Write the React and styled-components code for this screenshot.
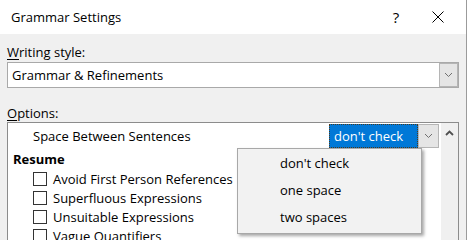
import React from 'react';
import styled, { createGlobalStyle } from 'styled-components';

const GlobalStyle = createGlobalStyle`
  html, body {
    margin: 0;
    padding: 0;
    background: #ffffff;
    overflow: hidden;
  }
  body {
    font-family: 'Open Sans', 'Noto Sans', sans-serif;
    font-size: 13px;
    color: #000;
  }
  * { box-sizing: border-box; }
`;

const Dialog = styled.div`
  width: 467px;
  height: 240px;
  border-right: 1px solid #9b9b9b;
  display: flex;
  flex-direction: column;
  overflow: hidden;
`;

const TitleBar = styled.div`
  height: 34px;
  flex: 0 0 34px;
  background: #ffffff;
  display: flex;
  align-items: center;
  padding-left: 11px;
`;

const Title = styled.div`
  flex: 1;
`;

const TitleButton = styled.div`
  width: ${(p) => p.$w}px;
  height: 34px;
  display: flex;
  align-items: center;
  justify-content: center;
  font-size: 15px;
`;

const Body = styled.div`
  flex: 1;
  background: #f0f0f0;
  padding: 10px 7px 0 7px;
  display: flex;
  flex-direction: column;
`;

const Label = styled.div`
  height: 16px;
  line-height: 16px;
  margin-top: ${(p) => p.$top || 0}px;
  u { text-decoration-thickness: 1px; text-underline-offset: 2px; }
`;

const Select = styled.div`
  margin-top: 2px;
  height: 26px;
  background: #ffffff;
  border: 1px solid #a9a9a9;
  display: flex;
  align-items: stretch;
`;

const SelectValue = styled.div`
  flex: 1;
  display: flex;
  align-items: center;
  padding-left: 4px;
`;

const DropButton = styled.div`
  width: ${(p) => p.$w || 19}px;
  background: #e5e5e5;
  border: 1px solid #b5b5b5;
  display: flex;
  align-items: center;
  justify-content: center;
`;

const OptionsBox = styled.div`
  position: relative;
  margin-top: 1px;
  height: 130px;
  background: #ffffff;
  border: 1px solid #8c8c8c;
  border-bottom: none;
  display: flex;
`;

const List = styled.div`
  flex: 1;
  display: flex;
  flex-direction: column;
`;

const SettingRow = styled.div`
  height: 25px;
  margin-bottom: 2px;
  display: flex;
  align-items: center;
  padding-left: 25px;
  padding-right: 2px;
`;

const SettingName = styled.div`
  flex: 1;
`;

const InlineSelect = styled.div`
  height: 24px;
  display: flex;
`;

const Highlight = styled.div`
  width: 89px;
  background: #0078d7;
  color: #ffffff;
  outline: 1px dotted #4a3a20;
  outline-offset: -1px;
  display: flex;
  align-items: center;
  padding-left: 5px;
`;

const GroupTitle = styled.div`
  height: 19px;
  line-height: 19px;
  padding-left: 5px;
  font-weight: 700;
`;

const CheckRow = styled.div`
  height: 19px;
  display: flex;
  align-items: center;
  padding-left: 25px;
  gap: 6px;
`;

const Box = styled.span`
  width: 14px;
  height: 14px;
  border: 1px solid #333333;
  background: #ffffff;
`;

const Scrollbar = styled.div`
  width: 17px;
  background: #f0f0f0;
  display: flex;
  justify-content: center;
  padding-top: 7px;
`;

const Popup = styled.div`
  position: absolute;
  left: 229px;
  top: 25px;
  width: 185px;
  height: 86px;
  background: #f2f2f2;
  border: 1px solid #a8a8a8;
  box-shadow: 2px 2px 3px rgba(0, 0, 0, 0.35);
  padding-top: 1px;
`;

const PopupItem = styled.div`
  height: 27px;
  line-height: 27px;
  padding-left: 42px;
`;

const Chevron = ({ up }) => (
  <svg width="9" height="6" viewBox="0 0 9 6">
    <path
      d={up ? 'M1 5 L4.5 1.5 L8 5' : 'M1 1 L4.5 4.5 L8 1'}
      fill="none"
      stroke={up ? '#505050' : '#707070'}
      strokeWidth={up ? 1.8 : 1}
    />
  </svg>
);

const checks = [
  'Avoid First Person References',
  'Superfluous Expressions',
  'Unsuitable Expressions',
  'Vague Quantifiers',
];

const choices = ["don't check", 'one space', 'two spaces'];

export default function App() {
  return (
    <>
      <GlobalStyle />
      <Dialog>
        <TitleBar>
          <Title>Grammar Settings</Title>
          <TitleButton $w={28}>?</TitleButton>
          <TitleButton $w={56}>
            <svg width="12" height="12" viewBox="0 0 12 12">
              <path d="M0.5 0.5 L11.5 11.5 M11.5 0.5 L0.5 11.5" stroke="#000" strokeWidth="1" />
            </svg>
          </TitleButton>
        </TitleBar>
        <Body>
          <Label>
            <u>W</u>riting style:
          </Label>
          <Select>
            <SelectValue>Grammar &amp; Refinements</SelectValue>
            <DropButton>
              <Chevron />
            </DropButton>
          </Select>
          <Label $top={17}>
            <u>O</u>ptions:
          </Label>
          <OptionsBox>
            <List>
              <SettingRow>
                <SettingName>Space Between Sentences</SettingName>
                <InlineSelect>
                  <Highlight>don't check</Highlight>
                  <DropButton $w={21}>
                    <Chevron />
                  </DropButton>
                </InlineSelect>
              </SettingRow>
              <GroupTitle>Resume</GroupTitle>
              {checks.map((c) => (
                <CheckRow key={c}>
                  <Box />
                  {c}
                </CheckRow>
              ))}
            </List>
            <Scrollbar>
              <Chevron up />
            </Scrollbar>
            <Popup>
              {choices.map((c) => (
                <PopupItem key={c}>{c}</PopupItem>
              ))}
            </Popup>
          </OptionsBox>
        </Body>
      </Dialog>
    </>
  );
}
